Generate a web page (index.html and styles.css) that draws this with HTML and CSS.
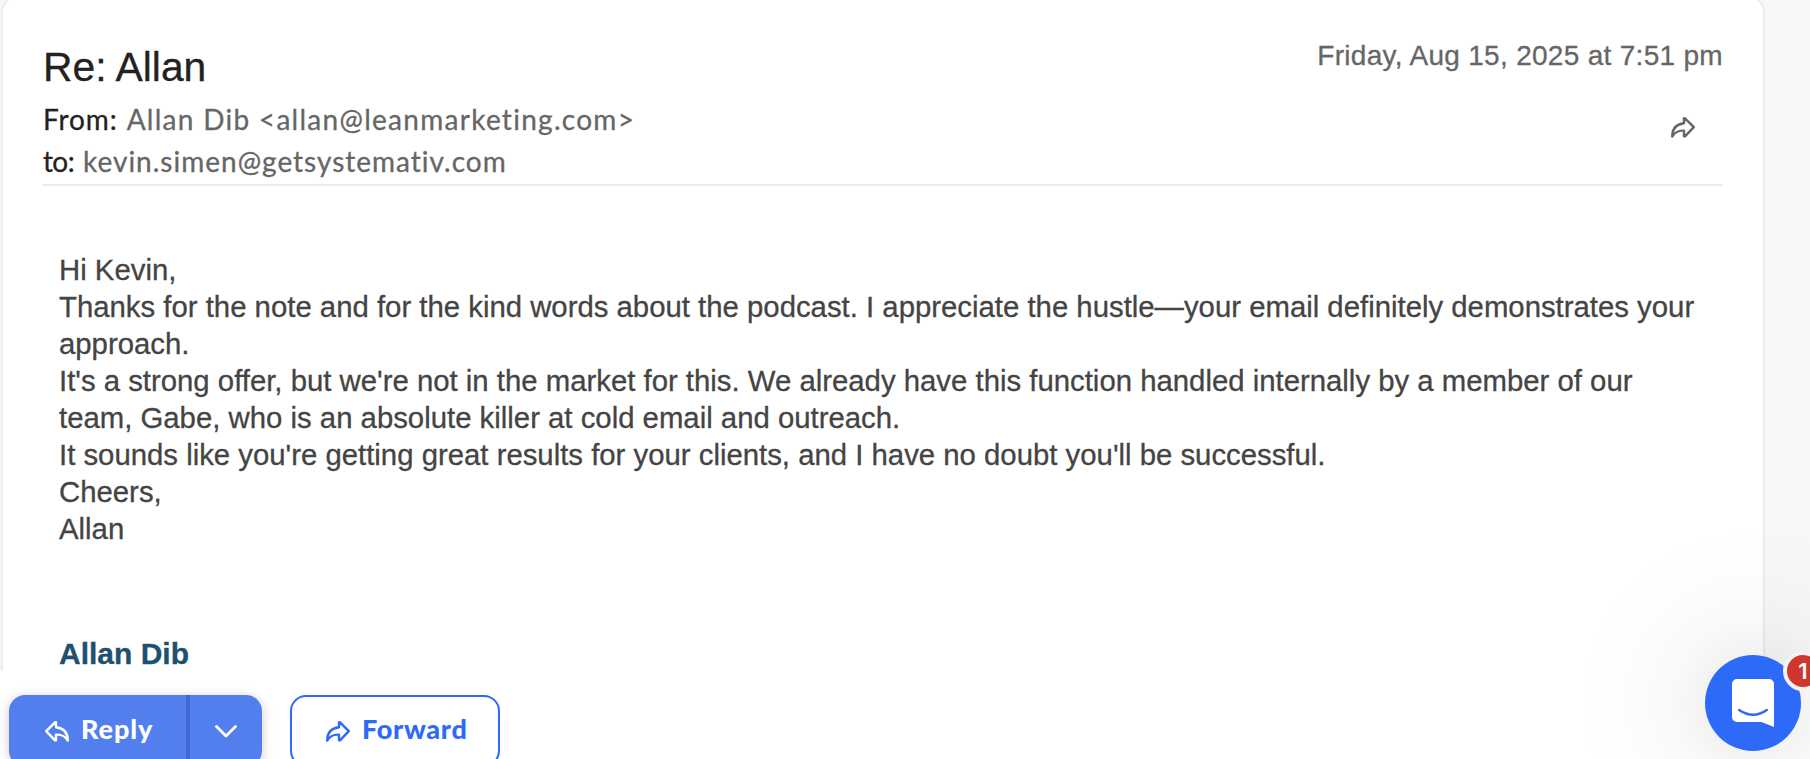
FILE: index.html
```
<!DOCTYPE html>
<html lang="en">
<head>
	<meta charset="utf-8" />
	<title>Re: Allan</title>
	<link rel="stylesheet" href="styles.css">
</head>
<body>
	<div class="mail">
		<div class="card">
			<div class="head">
				<div class="info">
					<h1 class="subject">Re: Allan</h1>
					<p class="from"><span class="label">From:</span><span class="addr">Allan Dib &lt;allan@leanmarketing.com&gt;</span></p>
					<p class="to"><span class="label">to:</span><span class="addr">kevin.simen@getsystemativ.com</span></p>
				</div>
				<div class="side">
					<span class="date">Friday, Aug 15, 2025 at 7:51 pm</span>
					<svg class="icon share" viewBox="0 0 24 21"><path d="M13 1.300H14L22.800 10.200 14 19.300H13V13.700C8 13.300 4.200 14.500 1.200 19.600 1.200 11.500 5.500 7 13 6.200Z"/></svg>
				</div>
			</div>
			<div class="message">
				<p>Hi Kevin,</p>
				<p>Thanks for the note and for the kind words about the podcast. I appreciate the hustle—your email definitely demonstrates your<br>approach.</p>
				<p>It's a strong offer, but we're not in the market for this. We already have this function handled internally by a member of our<br>team, Gabe, who is an absolute killer at cold email and outreach.</p>
				<p>It sounds like you're getting great results for your clients, and I have no doubt you'll be successful.</p>
				<p>Cheers,</p>
				<p>Allan</p>
				<p class="sign">Allan Dib</p>
			</div>
		</div>
	</div>
	<div class="actions">
		<div class="split">
			<button class="btn reply">
				<svg class="icon" viewBox="0 0 24 21"><path d="M11 1.300H10L1.200 10.200 10 19.300H11V13.700C16 13.300 19.800 14.500 22.800 19.600 22.800 11.500 18.500 7 11 6.200Z"/></svg>
				<span>Reply</span>
			</button>
			<button class="btn more">
				<svg class="chevron" viewBox="0 0 22 13"><path d="M1.500 1.500 11 11 20.500 1.500"/></svg>
			</button>
		</div>
		<button class="btn forward">
			<svg class="icon" viewBox="0 0 24 21"><path d="M13 1.300H14L22.800 10.200 14 19.300H13V13.700C8 13.300 4.200 14.500 1.200 19.600 1.200 11.500 5.500 7 13 6.200Z"/></svg>
			<span>Forward</span>
		</button>
	</div>
	<!-- chat launcher -->
	<div class="glow"></div>
	<div class="chat">
		<svg viewBox="0 0 42 48"><path fill="#fff" d="M5 0H37A5 5 0 0 1 42 5V48L29.500 43H5A5 5 0 0 1 0 38V5A5 5 0 0 1 5 0Z"/><path d="M7.200 31Q21 40.500 34.800 31" fill="none" stroke="#2e6af8" stroke-width="2.600" stroke-linecap="round"/></svg>
		<span class="count">1</span>
	</div>
</body>
</html>
```
FILE: styles.css
```
*{
	box-sizing: border-box;
}

body,h1,p{
	margin: 0;
	padding: 0;
}

body{
	height: 759px;
	overflow: hidden;
	background: #ffffff;
	font-family: "Liberation Sans", Arial, sans-serif;
	position: relative;
}

.mail{
	height: 671px;
	padding-left: 1px;
	overflow: hidden;
	background: #f7f7f8;
}

.card{
	width: 1764px;
	height: 720px;
	margin-top: -4px;
	padding: 0 40px;
	background: #ffffff;
	border: 2px solid #ebebf0;
	border-radius: 16px;
	-webkit-text-stroke: 0.3px;
}

.head{
	display: flex;
	justify-content: space-between;
	height: 188px;
	padding-top: 43px;
	border-bottom: 2px solid #ebebf0;
}

.subject{
	height: 57px;
	line-height: 52px;
	font-size: 40.8px;
	font-weight: 400;
	color: #222222;
}

.from,.to{
	display: flex;
	gap: 9px;
	height: 42px;
	line-height: 42px;
	font-family: Lato, sans-serif;
	font-size: 28px;
	letter-spacing: 1.28px;
	color: #666666;
}

.to{
	letter-spacing: 1px;
}

.label{
	color: #222222;
	letter-spacing: 0.9px;
}

.to .label{
	letter-spacing: -0.6px;
}

.side{
	display: flex;
	flex-direction: column;
	align-items: flex-end;
	color: #666666;
}

.date{
	height: 76px;
	line-height: 30px;
	font-size: 28px;
	letter-spacing: 0.3px;
}

.icon{
	width: 24px;
	height: 21px;
	fill: none;
	stroke: currentColor;
	stroke-width: 2.4;
	stroke-linejoin: round;
}

.share{
	margin-right: 28px;
}

.message{
	padding: 65px 0 0 16px;
	line-height: 37px;
	font-size: 29.33px;
	color: #444444;
	white-space: nowrap;
}

.sign{
	margin-top: 88px;
	font-size: 30px;
	font-weight: 700;
	color: #20506f;
}

.actions{
	display: flex;
	gap: 28px;
	padding: 24px 0 0 9px;
}

.split{
	display: flex;
	height: 72px;
	border-radius: 16px;
	box-shadow: 0 2px 12px rgba(0,0,0,0.2);
}

.btn{
	display: flex;
	align-items: center;
	height: 72px;
	padding: 0;
	border: 0;
	font-family: Lato, sans-serif;
	font-size: 27px;
	font-weight: 900;
	background: #537fee;
	color: #ffffff;
}

.btn .icon{
	margin-right: 12px;
}

.btn span{
	padding-bottom: 5px;
}

.reply{
	width: 181px;
	padding-left: 36px;
	border-right: 4px solid #4069d2;
	border-radius: 16px 0 0 16px;
	letter-spacing: 0.9px;
}

.more{
	width: 72px;
	justify-content: center;
	border-radius: 0 16px 16px 0;
}

.chevron{
	width: 22px;
	height: 13px;
	fill: none;
	stroke: #ffffff;
	stroke-width: 2.8;
	stroke-linecap: round;
	stroke-linejoin: round;
}

.forward{
	width: 210px;
	padding-left: 34px;
	background: #ffffff;
	border: 2px solid #2e6af8;
	border-radius: 16px;
	color: #2e6af8;
	letter-spacing: 0.7px;
}

.glow{
	position: absolute;
	right: 0;
	bottom: 0;
	width: 250px;
	height: 250px;
	background: radial-gradient(circle at 193px 193px, rgba(0,0,0,0.05) 46px, rgba(0,0,0,0.022) 80px, rgba(0,0,0,0.008) 130px, rgba(0,0,0,0) 180px);
}

.chat{
	position: absolute;
	left: 1705px;
	top: 655px;
	display: flex;
	align-items: center;
	justify-content: center;
	width: 96px;
	height: 96px;
	border-radius: 50%;
	background: #2e6af8;
}

.chat svg{
	width: 42px;
	height: 48px;
}

.count{
	position: absolute;
	left: 78px;
	top: -4px;
	width: 40px;
	height: 40px;
	border: 4px solid #f2f2f2;
	border-radius: 50%;
	background: #cf372e;
	color: #ffffff;
	font-family: Inter, sans-serif;
	font-size: 22px;
	font-weight: 600;
	line-height: 32px;
	text-align: center;
}
```
